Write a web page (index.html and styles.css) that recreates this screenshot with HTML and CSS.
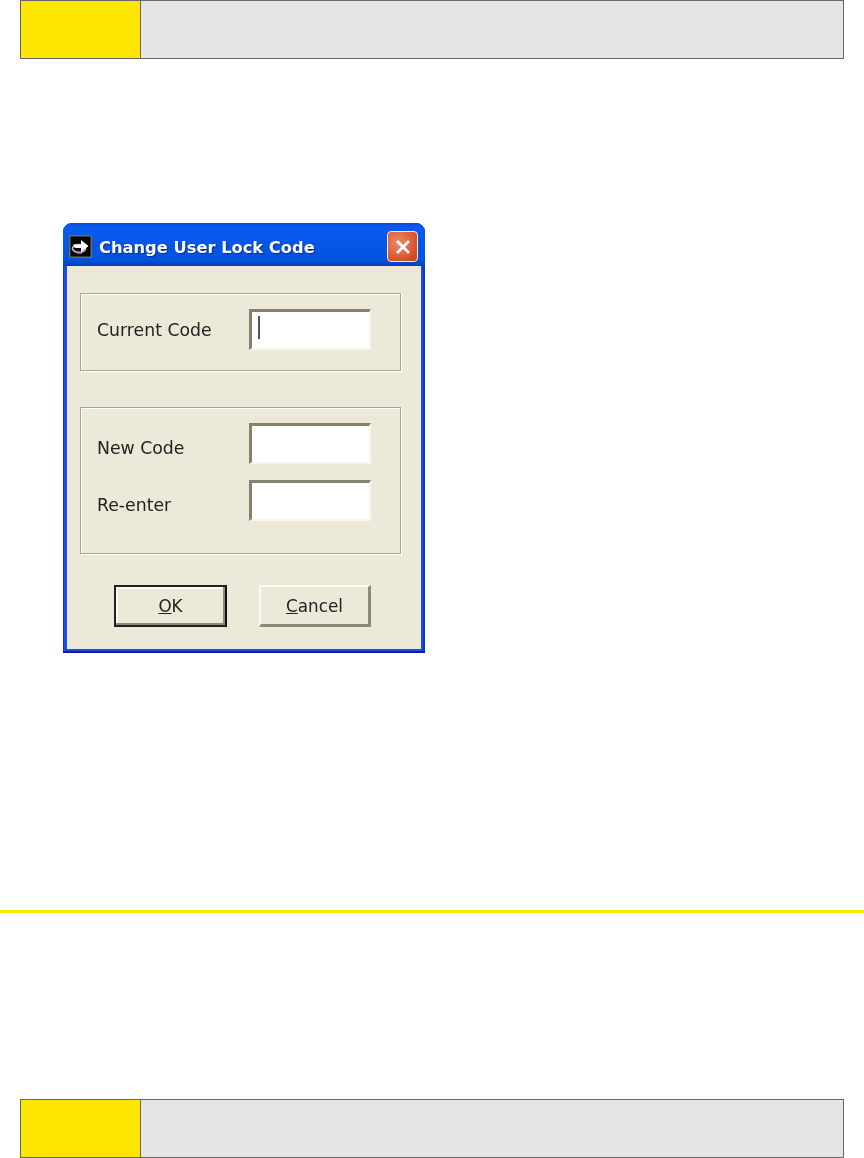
FILE: index.html
```html
<!DOCTYPE html>
<html lang="en">
<head>
  <meta charset="UTF-8">
  <meta name="viewport" content="width=device-width, initial-scale=1.0">
  <title>Change User Lock Code</title>
  <link rel="stylesheet" href="styles.css">
</head>
<body>
  <div class="note note-top">
    <div class="note-flag"></div>
    <div class="note-body"></div>
  </div>

  <div class="dialog">
    <div class="titlebar">
      <svg class="app-icon" width="23" height="23" viewBox="0 0 23 23">
        <rect width="23" height="23" fill="#6a6a6a"/>
        <rect x="1.5" y="1.5" width="20" height="20" fill="#050505"/>
        <ellipse cx="10" cy="13.5" rx="6.5" ry="3.8" fill="none" stroke="#c9a6b8" stroke-width="1.8"/>
        <path d="M4 9.5h8V5l7.5 6-7.5 6v-4H6z" fill="#fff"/>
        <path d="M8 18.5h5" stroke="#8a3f9a" stroke-width="1.4"/>
      </svg>
      <span class="title">Change User Lock Code</span>
      <button class="close-btn">
        <svg width="16" height="16" viewBox="0 0 16 16">
          <path d="M2 2l12 12M14 2L2 14" stroke="#fff" stroke-width="2.8" fill="none"/>
        </svg>
      </button>
    </div>

    <div class="dialog-body">
      <div class="group group-current">
        <div class="field">
          <label>Current Code</label>
          <div class="input"><span class="caret"></span></div>
        </div>
      </div>

      <div class="group group-new">
        <div class="field">
          <label>New Code</label>
          <div class="input"></div>
        </div>
        <div class="field">
          <label>Re-enter</label>
          <div class="input"></div>
        </div>
      </div>

      <div class="actions">
        <button class="btn btn-default"><span class="key">O</span>K</button>
        <button class="btn"><span class="key">C</span>ancel</button>
      </div>
    </div>
  </div>

  <div class="rule"></div>

  <div class="note note-bottom">
    <div class="note-flag"></div>
    <div class="note-body"></div>
  </div>
</body>
</html>
```

FILE: styles.css
```css
body {
  margin: 0;
  padding: 0;
  background-color: #fff;
  font-family: "DejaVu Sans", Arial, sans-serif;
  overflow: hidden;
}

.note {
  display: flex;
  box-sizing: border-box;
  height: 59px;
  margin: 0 20px;
  border: 1px solid #666;
}

.note-flag {
  width: 119px;
  background-color: #ffe600;
  border-right: 1px solid #666;
}

.note-body {
  flex: 1;
  background-color: #e5e5e5;
}

.note-bottom {
  margin-top: 186px;
}

.rule {
  height: 3px;
  margin-top: 257px;
  background-color: #ffe600;
}

/* XP style dialog */
.dialog {
  box-sizing: border-box;
  width: 362px;
  height: 430px;
  margin: 164px 0 0 63px;
  display: flex;
  flex-direction: column;
  background-color: #1650e6;
  border-radius: 9px 9px 0 0;
  box-shadow: inset 0 -2px 0 #0b1f96, inset 1px 0 0 #0a36c8, inset -2px 0 0 #0a36c8;
  filter: blur(0.5px);
}

.titlebar {
  display: flex;
  align-items: center;
  height: 43px;
  padding: 4px 7px 0 6px;
  box-sizing: border-box;
  border-radius: 9px 9px 0 0;
  background: linear-gradient(#0a4ee0 0%, #0a5cf0 12%, #0556e6 50%, #0353dd 85%, #0340bb 100%);
}

.app-icon {
  flex: none;
  margin-right: 7px;
  margin-top: -1px;
}

.title {
  flex: 1;
  padding-top: 2px;
  color: #fff;
  font-size: 16.3px;
  font-weight: bold;
  white-space: nowrap;
  text-shadow: 1px 1px 1px #0a2a90;
}

.close-btn {
  width: 31px;
  height: 31px;
  padding: 0;
  display: flex;
  align-items: center;
  justify-content: center;
  border: 1px solid #f3f0ea;
  border-radius: 4px;
  background: radial-gradient(circle at 35% 35%, #ec8a68, #dc5a32 60%, #c23c14);
}

.dialog-body {
  flex: 1;
  margin: 0 4px 4px 4px;
  padding: 27px 20px 0 13px;
  background-color: #ece9d8;
}

.group {
  box-sizing: border-box;
  border: 1px solid #a8a592;
  box-shadow: 1px 1px 0 #fff, inset 1px 1px 0 #fff;
  padding: 15px 29px 0 16px;
}

.group-current {
  height: 78px;
}

.group-new {
  height: 147px;
  margin-top: 36px;
}

.group-new label {
  margin-top: 8px;
}

.field {
  display: flex;
  align-items: center;
  justify-content: space-between;
  margin-bottom: 16px;
}

.field label {
  font-size: 17.3px;
  color: #222;
}

.input {
  box-sizing: border-box;
  width: 122px;
  height: 41px;
  padding: 4px 0 0 6px;
  background-color: #fff;
  border-style: solid;
  border-width: 3px 2px 2px 3px;
  border-color: #84816f #f7f6ee #f7f6ee #84816f;
}

.caret {
  display: block;
  width: 2px;
  height: 23px;
  background-color: #555;
}

.actions {
  display: flex;
  gap: 32px;
  margin: 31px 0 0 34px;
}

.btn {
  box-sizing: border-box;
  width: 112px;
  height: 42px;
  padding: 0;
  font-family: "DejaVu Sans", Arial, sans-serif;
  font-size: 16.8px;
  color: #222;
  background-color: #ece9d8;
  border-style: solid;
  border-width: 2px 3px 3px 2px;
  border-color: #fbfaf4 #8d8a78 #8d8a78 #fbfaf4;
}

.btn-default {
  width: 113px;
  border: 2px solid #222;
  border-right-color: #111;
  box-shadow: inset -2px -2px 0 #8d8a78, inset 2px 2px 0 #fbfaf4;
}

.key {
  text-decoration: underline;
}
```
